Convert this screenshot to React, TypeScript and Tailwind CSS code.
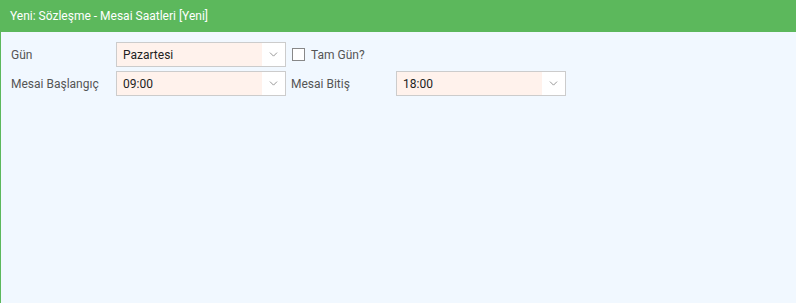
import { ChevronDown } from 'lucide-react';

const SelectBox = ({ value }: { value: string }) => (
  <div className="flex h-[25px] w-[170px] border border-[#cccccc] bg-white">
    <div className="flex flex-1 items-center bg-[#fff2ec] pl-[6px] text-[12px] text-[#222]">{value}</div>
    <div className="flex w-[23px] items-center justify-center text-[#888]">
      <ChevronDown size={13} strokeWidth={1.6} />
    </div>
  </div>
);

export default function App() {
  return (
    <div className="flex h-[303px] w-[796px] flex-col border-l border-[#5cb85c] bg-[#f1f8ff] font-['Roboto',sans-serif]">
      <div className="flex h-[32px] items-center bg-[#5cb85c] pl-[9px] text-[12px] text-white">
        Yeni: Sözleşme - Mesai Saatleri [Yeni]
      </div>
      <div className="flex flex-col gap-[4px] pl-[10px] pt-[10px] text-[12px] text-[#555]">
        <div className="flex items-center">
          <span className="w-[105px]">Gün</span>
          <SelectBox value="Pazartesi" />
          <label className="ml-[6px] flex items-center gap-[6px]">
            <span className="h-[13px] w-[13px] border border-[#888] bg-white" />
            <span>Tam Gün?</span>
          </label>
        </div>
        <div className="flex items-center">
          <span className="w-[105px]">Mesai Başlangıç</span>
          <SelectBox value="09:00" />
          <span className="ml-[5px] w-[105px]">Mesai Bitiş</span>
          <SelectBox value="18:00" />
        </div>
      </div>
    </div>
  );
}
